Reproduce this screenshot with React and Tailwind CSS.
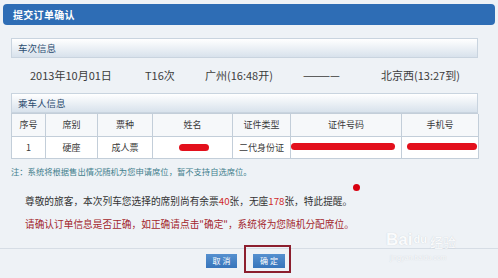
import React from "react";

function Blob({ w, h, className = "" }) {
  return (
    <span
      className={"block rounded-full bg-[#e3101c] " + className}
      style={{ width: w, height: h }}
    />
  );
}

export default function App() {
  const head = ["序号", "席别", "票种", "姓名", "证件类型", "证件号码", "手机号"];
  return (
    <div className="relative w-[498px] h-[278px] overflow-hidden bg-[#eef2f6] font-['Noto_Sans_CJK_SC','Liberation_Sans',sans-serif]">
      {/* title bar */}
      <div className="mx-[3px] mt-[4px] h-[21px] rounded-[4px] bg-[#2e6db5] flex items-center pl-[10px] text-white text-[10px] font-bold tracking-[0.3px]">
        提交订单确认
      </div>

      <div className="ml-[11px] mr-[20px] mt-[13px]">
        {/* section 1 */}
        <div className="h-[20px] border border-[#c9d4df] bg-linear-to-b from-[#ffffff] to-[#d8e2ec] flex items-center pl-[6px] text-[9.5px] text-[#2c4d70]">
          车次信息
        </div>
        <div className="h-[35px] flex items-center pl-[19px] text-[11px] text-[#3c3c3c]">
          <span className="w-[115px]">2013年10月01日</span>
          <span className="w-[60px]">T16次</span>
          <span className="w-[98px]">广州(16:48开)</span>
          <span className="w-[78px] whitespace-nowrap">————</span>
          <span>北京西(13:27到)</span>
        </div>

        {/* section 2 */}
        <div className="h-[20px] border border-[#c9d4df] bg-linear-to-b from-[#ffffff] to-[#d8e2ec] flex items-center pl-[6px] text-[9.5px] text-[#2c4d70]">
          乘车人信息
        </div>
        <div className="grid grid-cols-[34px_52px_55px_80px_58px_111px_77px] border-l border-t border-[#c3ced9] text-[9px] text-[#3a3a3a]">
          {head.map((h) => (
            <div
              key={h}
              className="h-[23px] flex items-center justify-center border-r border-b border-[#c3ced9] bg-[#f6f8fa]"
            >
              {h}
            </div>
          ))}
          <div className="h-[22px] flex items-center justify-center border-r border-b border-[#c3ced9] bg-white">1</div>
          <div className="h-[22px] flex items-center justify-center border-r border-b border-[#c3ced9] bg-white">硬座</div>
          <div className="h-[22px] flex items-center justify-center border-r border-b border-[#c3ced9] bg-white">成人票</div>
          <div className="h-[22px] flex items-center justify-center border-r border-b border-[#c3ced9] bg-white">
            <Blob w={30} h={7} className="ml-[2px] -mt-[1px]" />
          </div>
          <div className="h-[22px] flex items-center justify-center border-r border-b border-[#c3ced9] bg-white">二代身份证</div>
          <div className="h-[22px] flex items-center border-r border-b border-[#c3ced9] bg-white">
            <Blob w={104} h={7} className="-mt-[2px]" />
          </div>
          <div className="h-[22px] flex items-center border-r border-b border-[#c3ced9] bg-white pl-[5px]">
            <Blob w={70} h={7} className="-mt-[3px]" />
          </div>
        </div>

        <div className="h-[24px] flex items-center text-[8.3px] text-[#3f7e8c]">
          注：系统将根据售出情况随机为您申请席位，暂不支持自选席位。
        </div>

        <div className="pl-[14px] mt-[8px] text-[9.7px]">
          <div className="h-[20px] flex items-center text-[#333333]">
            尊敬的旅客，本次列车您选择的席别尚有余票<span className="text-[#d02a2a]">40</span>张，无座<span className="text-[#d02a2a]">178</span>张，特此提醒。
          </div>
          <div className="h-[20px] mt-[3px] flex items-center text-[#a3262c]">
            请确认订单信息是否正确，如正确请点击"确定"，系统将为您随机分配席位。
          </div>
        </div>
      </div>

      <div className="mt-[14px] h-px bg-[#d6dde5]" />

      <div className="mt-[5px] flex pl-[206px] gap-[16px] text-[8px] text-white">
        <div className="w-[31px] h-[14px] bg-linear-to-b from-[#5590cf] to-[#3775bb] flex items-center justify-center tracking-[2px] pl-[2px]">
          取消
        </div>
        <div className="w-[32px] h-[14px] bg-linear-to-b from-[#5590cf] to-[#3775bb] flex items-center justify-center tracking-[2px] pl-[2px]">
          确定
        </div>
      </div>

      {/* annotations */}
      <div className="absolute left-[244px] top-[245px] w-[47px] h-[28px] border-2 border-[#8c1f2e]" />
      <div className="absolute left-[353px] top-[184px] w-[7px] h-[7px] rounded-full bg-[#d8000f]" />

      {/* watermark */}
      <div className="absolute left-[386px] top-[231px] flex items-end text-white opacity-75 [text-shadow:0_0_1px_#b4bcc5]">
        <span className="text-[17px] font-bold leading-none font-['Liberation_Sans',sans-serif]">Bai</span>
        <span className="text-[11px] font-bold leading-none ml-[1px] mb-[3px] font-['Liberation_Sans',sans-serif]">du</span>
        <span className="text-[13px] leading-none ml-[3px]">经验</span>
      </div>
      <div className="absolute left-[390px] top-[253px] text-[7px] text-white opacity-75 [text-shadow:0_0_1px_#b4bcc5] font-['Liberation_Sans',sans-serif]">
        jingyan.baidu.com
      </div>
    </div>
  );
}
